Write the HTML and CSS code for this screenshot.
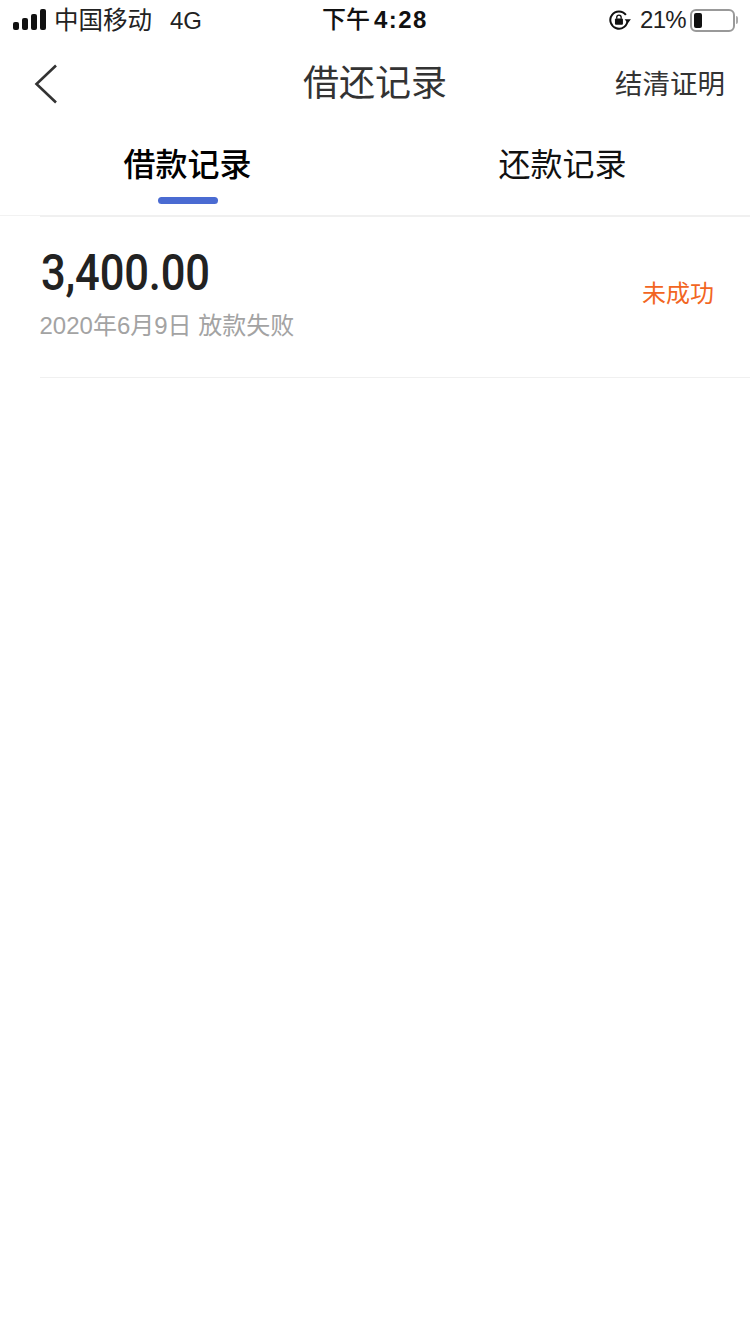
FILE: index.html
```html
<!DOCTYPE html>
<html lang="zh-CN">
<head>
  <meta charset="UTF-8" />
  <meta name="viewport" content="width=device-width, initial-scale=1" />
  <title>借还记录</title>
  <link rel="stylesheet" href="styles.css">
</head>
<body>

  <div class="statusbar">
    <div class="status-left">
      <div class="signal">
        <span class="bar bar1"></span>
        <span class="bar bar2"></span>
        <span class="bar bar3"></span>
        <span class="bar bar4"></span>
      </div>
      <span class="carrier">中国移动</span>
      <span class="network">4G</span>
    </div>
    <div class="status-time"><span class="time-cn">下午</span> 4:28</div>
    <div class="status-right">
      <svg class="lock-icon" width="22" height="20" viewBox="0 0 22 20">
        <path d="M16.6 5.2A8.2 8.2 0 1 0 18.2 10" fill="none" stroke="#111" stroke-width="1.9"/>
        <path d="M15.4 9.4h6l-3 3.6z" fill="#111"/>
        <rect x="6.2" y="8.6" width="7.6" height="6" rx="1" fill="#111"/>
        <path d="M7.9 8.8V7.4a2.1 2.1 0 0 1 4.2 0v1.4" fill="none" stroke="#111" stroke-width="1.3"/>
      </svg>
      <span class="percent">21%</span>
      <div class="battery"><span class="battery-level"></span></div>
      <span class="battery-cap"></span>
    </div>
  </div>

  <div class="navbar">
    <svg class="back-icon" width="26" height="42" viewBox="0 0 26 42">
      <path d="M23 2.5 3.5 21 23 39.5" fill="none" stroke="#333" stroke-width="2.6"/>
    </svg>
    <h1 class="nav-title">借还记录</h1>
    <span class="nav-action">结清证明</span>
  </div>

  <div class="tabs">
    <div class="tab active">借款记录</div>
    <div class="tab">还款记录</div>
  </div>

  <div class="list">
    <div class="record">
      <div class="record-info">
        <div class="amount">3,400.00</div>
        <div class="record-desc">2020年6月9日 放款失败</div>
      </div>
      <div class="record-status">未成功</div>
    </div>
  </div>

</body>
</html>
```

FILE: styles.css
```css
* {
  margin: 0;
  padding: 0;
  box-sizing: border-box;
}

html, body {
  width: 100%;
  height: 100%;
  font-family: "Liberation Sans", "Noto Sans CJK SC", sans-serif;
  background: #fff;
  overflow: hidden;
}

.statusbar {
  height: 40px;
  display: flex;
  align-items: center;
  justify-content: space-between;
  position: relative;
  padding: 0 12px 0 13px;
  color: #111;
  font-size: 25px;
}

.status-left {
  display: flex;
  align-items: center;
}

.signal {
  display: flex;
  align-items: flex-end;
  gap: 3px;
  height: 21px;
  margin-right: 9px;
  margin-top: -2px;
}

.bar {
  width: 6px;
  background: #111;
  border-radius: 2px;
}

.bar1 { height: 8px; }
.bar2 { height: 12px; }
.bar3 { height: 16px; }
.bar4 { height: 21px; }

.carrier {
  font-size: 24.5px;
  color: #222;
  margin-left: -1px;
  margin-top: -3px;
}

.network {
  margin-left: 18px;
  font-size: 24px;
  color: #222;
  margin-top: 1px;
}

.status-time {
  position: absolute;
  left: 322px;
  top: 0;
  line-height: 40px;
  font-size: 24px;
  font-weight: bold;
  letter-spacing: 1.4px;
  word-spacing: -4px;
}

.time-cn {
  font-weight: 500;
  letter-spacing: 0;
}

.status-right {
  display: flex;
  align-items: center;
}

.lock-icon {
  margin-right: 12px;
  transform: translateX(3px) scale(1.05);
}

.percent {
  font-size: 24px;
  letter-spacing: -0.7px;
  color: #222;
  margin-right: 4px;
}

.battery {
  width: 45px;
  height: 23px;
  border: 2px solid #999;
  border-radius: 6px;
  padding: 2px;
}

.battery-level {
  display: block;
  width: 8px;
  height: 100%;
  background: #111;
  border-radius: 2px;
}

.battery-cap {
  width: 2px;
  height: 8px;
  margin-left: 1px;
  background: #aaa;
  border-radius: 0 2px 2px 0;
}

.navbar {
  height: 88px;
  display: flex;
  align-items: center;
  justify-content: space-between;
  position: relative;
  padding: 0 25px 0 33px;
}

.nav-title {
  position: absolute;
  left: 0;
  right: 0;
  top: 20px;
  text-align: center;
  font-size: 36px;
  line-height: 48px;
  font-weight: normal;
  color: #333;
}

.nav-action {
  width: 110px;
  margin-top: -4px;
  font-size: 27.5px;
  white-space: nowrap;
  color: #333;
}

.tabs {
  height: 88px;
  display: flex;
  border-bottom: 1px solid #f2f2f2;
}

.tab {
  position: relative;
  width: 375px;
  padding-top: 16px;
  text-align: center;
  font-size: 32px;
  line-height: 42px;
  color: #111;
}

.tab.active {
  font-weight: 500;
  color: #000;
}

.tab.active::after {
  content: "";
  position: absolute;
  left: 158px;
  top: 69px;
  width: 60px;
  height: 7px;
  border-radius: 4px;
  background: #4a6bd2;
}

.list {
  padding-left: 40px;
}

.record {
  height: 163px;
  display: flex;
  align-items: center;
  justify-content: space-between;
  padding-right: 36px;
  margin-top: -1px;
  border-top: 2px solid #f0f0f0;
  border-bottom: 1px solid #f0f0f0;
}

.record-info {
  margin-top: -5px;
}

.amount {
  font-family: Roboto, "Liberation Sans", sans-serif;
  font-size: 50px;
  font-weight: 500;
  line-height: 58px;
  letter-spacing: -0.2px;
  color: #222;
  transform: scaleX(0.87);
  transform-origin: left center;
  margin-top: -4px;
  margin-left: 1px;
}

.record-desc {
  margin-top: 8px;
  margin-left: -0.5px;
  font-size: 24px;
  line-height: 32px;
  color: #a3a3a3;
}

.record-status {
  font-size: 24px;
  color: #f26522;
  margin-top: -11px;
}
```
